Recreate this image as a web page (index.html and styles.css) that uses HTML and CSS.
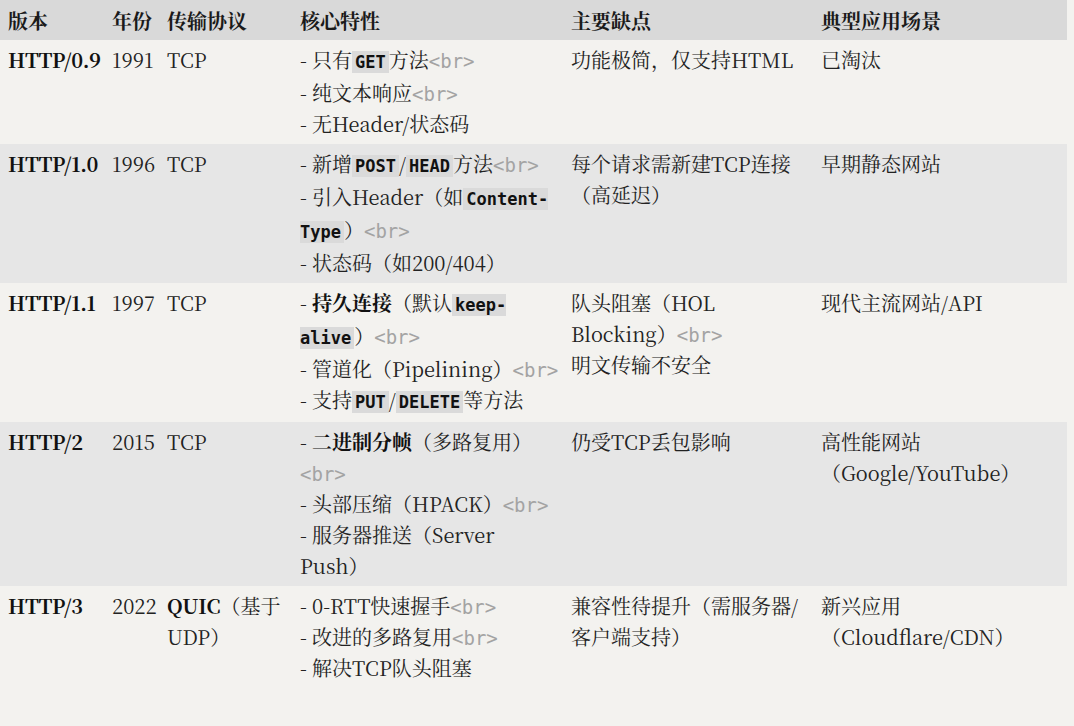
FILE: index.html
```html
<!DOCTYPE html>
<html lang="zh-CN">
<head>
<meta charset="utf-8">
<title>HTTP 版本对比</title>
<link rel="stylesheet" href="styles.css">
</head>
<body>
<table class="cmp">
  <colgroup>
    <col class="c-ver">
    <col class="c-year">
    <col class="c-proto">
    <col class="c-feat">
    <col class="c-cons">
    <col class="c-use">
  </colgroup>
  <thead>
    <tr><th>版本</th><th class="yr">年份</th><th>传输协议</th><th>核心特性</th><th>主要缺点</th><th>典型应用场景</th></tr>
  </thead>
  <tbody>
    <tr>
      <td class="ver"><strong>HTTP/0.9</strong></td>
      <td class="yr">1991</td>
      <td>TCP</td>
      <td>
        <div class="item">- 只有<code>GET</code>方法<span class="tag">&lt;br&gt;</span></div>
        <div class="item">- 纯文本响应<span class="tag">&lt;br&gt;</span></div>
        <div class="item">- 无Header/状态码</div>
      </td>
      <td>功能极简，仅支持HTML</td>
      <td>已淘汰</td>
    </tr>
    <tr>
      <td class="ver"><strong>HTTP/1.0</strong></td>
      <td class="yr">1996</td>
      <td>TCP</td>
      <td>
        <div class="item">- 新增<code>POST</code>/<code>HEAD</code>方法<span class="tag">&lt;br&gt;</span></div>
        <div class="item">- 引入Header（如<code>Content-Type</code>）<span class="tag">&lt;br&gt;</span></div>
        <div class="item">- 状态码（如200/404）</div>
      </td>
      <td>每个请求需新建TCP连接（高延迟）</td>
      <td>早期静态网站</td>
    </tr>
    <tr>
      <td class="ver"><strong>HTTP/1.1</strong></td>
      <td class="yr">1997</td>
      <td>TCP</td>
      <td>
        <div class="item">- <strong>持久连接</strong>（默认<code>keep-alive</code>）<span class="tag">&lt;br&gt;</span></div>
        <div class="item nowrap">- 管道化（Pipelining）<span class="tag">&lt;br&gt;</span></div>
        <div class="item">- 支持<code>PUT</code>/<code>DELETE</code>等方法</div>
      </td>
      <td>队头阻塞（HOL Blocking）<span class="tag">&lt;br&gt;</span><br>明文传输不安全</td>
      <td>现代主流网站/API</td>
    </tr>
    <tr>
      <td class="ver"><strong>HTTP/2</strong></td>
      <td class="yr">2015</td>
      <td>TCP</td>
      <td>
        <div class="item">- <strong>二进制分帧</strong>（多路复用）<span class="tag">&lt;br&gt;</span></div>
        <div class="item">- 头部压缩（HPACK）<span class="tag">&lt;br&gt;</span></div>
        <div class="item">- 服务器推送（Server Push）</div>
      </td>
      <td>仍受TCP丢包影响</td>
      <td>高性能网站（Google/YouTube）</td>
    </tr>
    <tr>
      <td class="ver"><strong>HTTP/3</strong></td>
      <td class="yr">2022</td>
      <td><strong>QUIC</strong>（基于UDP）</td>
      <td>
        <div class="item">- 0-RTT快速握手<span class="tag">&lt;br&gt;</span></div>
        <div class="item">- 改进的多路复用<span class="tag">&lt;br&gt;</span></div>
        <div class="item">- 解决TCP队头阻塞</div>
      </td>
      <td>兼容性待提升（需服务器/客户端支持）</td>
      <td>新兴应用（Cloudflare/CDN）</td>
    </tr>
  </tbody>
</table>
</body>
</html>
```

FILE: styles.css
```css
html, body {
  margin: 0;
  padding: 0;
  background: #f3f2ef;
}

body {
  font-family: "Noto Serif CJK SC", "Liberation Serif", "Noto Sans CJK SC", serif;
  font-size: 20px;
  line-height: 31px;
  color: #222222;
}

.cmp {
  border-collapse: collapse;
  table-layout: fixed;
  width: 1067px;
}

.c-ver { width: 104px; }
.c-year { width: 55px; }
.c-proto { width: 133px; }
.c-feat { width: 271px; }
.c-cons { width: 250px; }
.c-use { width: 254px; }

.cmp th {
  background: #d9d9d9;
  text-align: left;
  font-weight: bold;
  padding: 5px 8px 4px;
  color: #1a1a1a;
}

.cmp td {
  padding: 4px 8px 5px;
  vertical-align: top;
}

.cmp .yr {
  padding-right: 4px;
}

.cmp .ver {
  padding-right: 0;
  white-space: nowrap;
  letter-spacing: -0.4px;
}

.cmp tbody tr:nth-child(odd) td {
  background: #f3f2ef;
}

.cmp tbody tr:nth-child(even) td {
  background: #e6e6e6;
}

.cmp strong {
  font-weight: bold;
  color: #111111;
}

.nowrap {
  white-space: nowrap;
}

.cmp code {
  font-family: "DejaVu Sans Mono", "Liberation Mono", monospace;
  font-size: 17px;
  line-height: 30px;
  font-weight: bold;
  background: #dadada;
  color: #111111;
  padding: 1px 3px;
}

.tag {
  font-family: "DejaVu Sans Mono", "Liberation Mono", monospace;
  font-size: 19px;
  line-height: 19px;
  color: #a3a3a3;
}
```
